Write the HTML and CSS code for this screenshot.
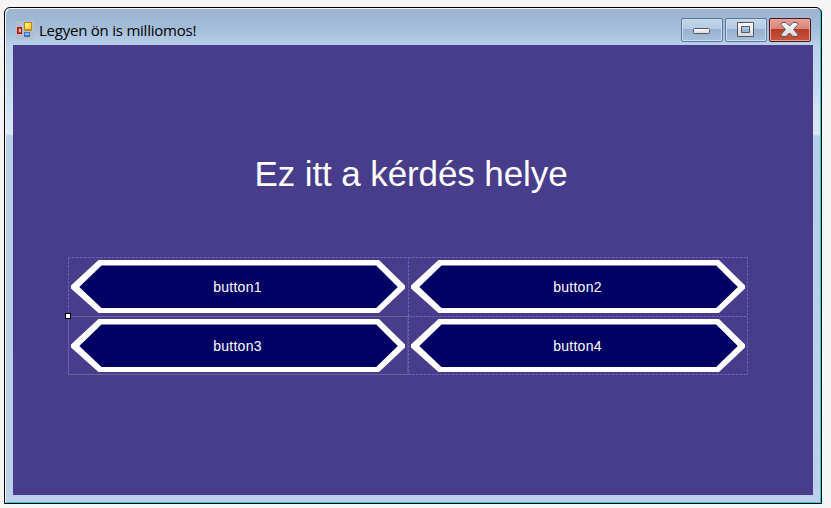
FILE: index.html
```html
<!DOCTYPE html>
<html lang="hu">
<head>
<meta charset="utf-8">
<title>Legyen ön is milliomos!</title>
<link rel="stylesheet" href="styles.css">
</head>
<body>
<svg class="defs" width="0" height="0" aria-hidden="true">
  <symbol id="plate" viewBox="0 0 334 53">
    <path fill="#fff" d="M27.5 0H308L334 25.5V28.5L308 53H27.5L0 28.5V25.5Z"/>
    <path fill="#000064" d="M30.5 5.6H305.2L326.8 27L305.2 48.1H30.5L8.3 27Z"/>
  </symbol>
</svg>
<main class="window">
  <header class="titlebar">
    <svg class="app-icon" width="18" height="18" viewBox="0 0 18 18">
      <defs>
        <linearGradient id="gold" x2="1" y2="1"><stop stop-color="#fff4a0"/><stop offset="1" stop-color="#ffc51c"/></linearGradient>
      </defs>
      <path fill="#b9bec6" d="M0 0H18V18H0Z"/>
      <path fill="#a9c0da" d="M1 1H6V5H1ZM1 14H6V17H1Z"/>
      <path fill="#b88a10" d="M8 1H16V10H8Z"/>
      <path fill="url(#gold)" d="M9 2H15V8H9Z"/>
      <path fill="#a81810" d="M1 6H6V13H1Z"/>
      <path fill="#d93a28" d="M2 7H5V12H2Z"/>
      <path fill="#ffb8a8" d="M3 8H5V11H3Z"/>
      <path fill="#3c72cc" d="M8 11H14V16H8Z"/>
      <path fill="#8abcff" d="M9 12H13V14H9Z"/>
    </svg>
    <h1 class="caption">Legyen ön is milliomos!</h1>
    <div class="controls">
      <button class="control" aria-label="Minimize">
        <svg width="42" height="24" viewBox="0 0 42 24"><defs><linearGradient id="glyph" x2="0" y2="1"><stop stop-color="#fff"/><stop offset="1" stop-color="#d5d5d5"/></linearGradient></defs><rect x="12.5" y="10.5" width="16" height="5" rx="1" fill="url(#glyph)" stroke="#535666"/></svg>
      </button>
      <button class="control" aria-label="Maximize">
        <svg width="42" height="24" viewBox="0 0 42 24"><path fill="url(#glyph)" fill-rule="evenodd" stroke="#535666" stroke-linejoin="round" d="M12.5 4.5H28.5V18.5H12.5ZM16.5 8.5V14.5H24.5V8.5Z"/></svg>
      </button>
      <button class="control close" aria-label="Close">
        <svg width="42" height="24" viewBox="0 0 42 24"><path fill="url(#glyph)" stroke="#535666" stroke-linejoin="round" d="M13 4.5H17L20.5 8L24 4.5H28L29 6.5L24.5 11.5L29 16.5L28 18.5H24L20.5 15L17 18.5H13L12 16.5L16.5 11.5L12 6.5Z"/></svg>
      </button>
    </div>
  </header>
  <section class="client">
    <h2 class="question">Ez itt a kérdés helye</h2>
    <div class="answers">
      <button class="answer"><svg><use href="#plate"/></svg><span>button1</span></button>
      <button class="answer"><svg><use href="#plate"/></svg><span>button2</span></button>
      <button class="answer"><svg><use href="#plate"/></svg><span>button3</span></button>
      <button class="answer"><svg><use href="#plate"/></svg><span>button4</span></button>
      <svg class="guides" width="680" height="118" viewBox="0 0 680 118">
        <path class="dashed" d="M0 .5H680M340 59.5H680M340 117.5H680M.5 0V59M340.5 0V118M679.5 0V118"/>
        <path class="selected" d="M0 59.5H340M0 117.5H340M.5 59V118"/>
        <path class="dotted" d="M0 59.5H340M0 117.5H340M339.5 59V118"/>
      </svg>
      <i class="handle"></i>
    </div>
  </section>
</main>
</body>
</html>
```
FILE: styles.css
```css
* { box-sizing: border-box; }

body {
  margin: 0;
  padding: 7px 0 0 4px;
  height: 508px;
  overflow: hidden;
  background: #f5f5f5;
}

.defs { position: absolute; }

.window {
  width: 818px;
  height: 497px;
  padding: 0 7px 7px 8px;
  border: 1px solid #000;
  border-radius: 6px 6px 0 0;
  background: linear-gradient(#99b4d1 0, #a3bcd8 20px, #b9d1ea 38px, #c5daef 75px, #dce9f6 126px, #b6d0e8 128px, #b9d1ea 400px, #bdcfea 100%);
  box-shadow: inset 1px 1px #f4f8fc, inset -1px -1px #26cce0;
}

.titlebar {
  display: flex;
  height: 37px;
  padding: 0 3px 0 3px;
}

.app-icon { margin-top: 13px; }

.caption {
  flex: 1;
  margin: 12px 0 0 5px;
  font: 400 15px/20px "Open Sans", "Noto Sans", sans-serif;
  letter-spacing: -0.23px;
  color: #000;
}

.controls {
  display: flex;
  gap: 2px;
  margin-top: 10px;
}

.control {
  width: 42px;
  height: 24px;
  padding: 0;
  border: 1px solid #617692;
  border-radius: 2px;
  background: linear-gradient(#c2d5ea 0, #b5cbe3 10px, #97b1ce 10px, #a7c0dc 100%);
  box-shadow: inset 0 0 0 1px #c8dbf0;
}

.control svg { display: block; margin: -1px; }

.close {
  border-color: #4b1220;
  background: linear-gradient(#e5a095 0, #d98577 10px, #b73b25 10px, #c9543c 100%);
  box-shadow: inset 0 0 0 1px #e9a79c;
}

.client {
  width: 800px;
  height: 450px;
  padding: 104px 55px 0;
  background: #483d8b;
}

.question {
  width: 686px;
  height: 50px;
  margin: 0 0 58px;
  font: 400 35px/50px "Liberation Sans", Arial, sans-serif;
  letter-spacing: -0.1px;
  text-align: center;
  color: #fff;
}

.answers {
  position: relative;
  display: grid;
  grid-template-columns: 334px 334px;
  grid-template-rows: 53px 53px;
  gap: 6px;
  width: 680px;
  height: 118px;
  padding: 3px;
}

.answer {
  display: grid;
  place-items: center;
  padding: 0;
  border: 0;
  background: none;
  color: #fff;
  font: 14px/20px "Liberation Sans", Arial, sans-serif;
  letter-spacing: 0.25px;
}

.answer svg,
.answer span { grid-area: 1 / 1; }

.answer svg { width: 334px; height: 53px; }

.answer span {
  position: relative;
  margin-right: 1px;
}

.guides {
  position: absolute;
  inset: 0;
  pointer-events: none;
}

.guides path { fill: none; }
.dashed { stroke: #6a5cba; stroke-dasharray: 3 1; }
.selected { stroke: #6a5cba; }
.dotted { stroke: #6b6b78; stroke-dasharray: 1 1; }

.handle {
  position: absolute;
  left: -3px;
  top: 56px;
  width: 6px;
  height: 6px;
  border: 1px solid #000;
  background: #fff;
}
```
